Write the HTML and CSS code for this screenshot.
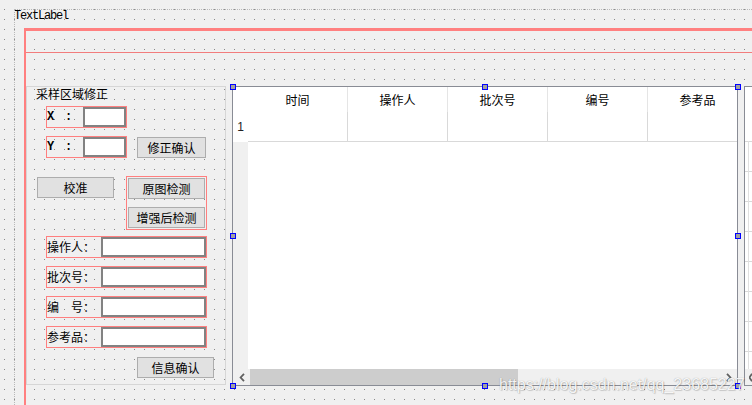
FILE: index.html
```html
<!DOCTYPE html>
<html>
<head>
<meta charset="utf-8">
<link rel="stylesheet" href="styles.css">
</head>
<body>
<div class="form">
  <div class="text-label">TextLabel</div>
  <div class="outer-layout">
    <div class="inner-layout">
      <div class="main-row">
        <div class="group">
          <div class="group-title">采样区域修正</div>
          <div class="row-x">
            <div class="lay field-xy"><span class="xy-label">X  :</span><span class="edit edit-xy"></span></div>
          </div>
          <div class="row-y">
            <div class="lay field-xy"><span class="xy-label">Y  :</span><span class="edit edit-xy"></span></div>
            <button class="btn btn-fix">修正确认</button>
          </div>
          <div class="row-cal">
            <button class="btn btn-cal">校准</button>
            <div class="lay detect">
              <button class="btn">原图检测</button>
              <button class="btn">增强后检测</button>
            </div>
          </div>
          <div class="fields">
            <div class="lay field"><span class="f-label">操作人：</span><span class="edit"></span></div>
            <div class="lay field"><span class="f-label">批次号：</span><span class="edit"></span></div>
            <div class="lay field"><span class="f-label">编　号：</span><span class="edit"></span></div>
            <div class="lay field"><span class="f-label">参考品：</span><span class="edit"></span></div>
          </div>
          <button class="btn btn-info">信息确认</button>
        </div>

        <div class="table">
          <div class="t-head">
            <div class="corner"></div>
            <div class="th">时间</div>
            <div class="th">操作人</div>
            <div class="th">批次号</div>
            <div class="th">编号</div>
            <div class="th">参考品</div>
          </div>
          <div class="t-row">
            <div class="rh">1</div>
            <div class="td"></div>
            <div class="td"></div>
            <div class="td"></div>
            <div class="td"></div>
            <div class="td"></div>
          </div>
          <div class="t-body">
            <div class="rh-fill"></div>
            <div class="vp"></div>
          </div>
          <div class="hscroll">
            <div class="arrow"><svg width="6" height="9" viewBox="0 0 6 9"><path d="M5 0.8 L1.6 4.5 L5 8.2" fill="none" stroke="#606060" stroke-width="1.8"/></svg></div>
            <div class="thumb"></div>
            <div class="track"></div>
            <div class="arrow"><svg width="6" height="9" viewBox="0 0 6 9"><path d="M1 0.8 L4.4 4.5 L1 8.2" fill="none" stroke="#606060" stroke-width="1.8"/></svg></div>
          </div>
          <span class="handle h-tl"></span>
          <span class="handle h-tm"></span>
          <span class="handle h-tr"></span>
          <span class="handle h-ml"></span>
          <span class="handle h-mr"></span>
          <span class="handle h-bl"></span>
          <span class="handle h-bm"></span>
          <span class="handle h-br"></span>
        </div>

        <div class="table2">
          <div class="t2-body">
            <div class="t2-rh"></div>
            <div class="t2-col"></div>
          </div>
          <div class="t2-scroll">
            <svg width="3" height="9" viewBox="0 0 3 9"><path d="M3 0.8 L0.4 4.5 L3 8.2" fill="none" stroke="#606060" stroke-width="1.8"/></svg>
          </div>
        </div>
      </div>
    </div>
  </div>
</div>
<div class="watermark">https://blog.csdn.net/qq_23685227</div>
</body>
</html>
```

FILE: styles.css
```css
* { box-sizing: border-box; }
html, body { margin: 0; }
body {
  width: 752px;
  height: 405px;
  overflow: hidden;
  position: relative;
  padding: 9px 0 0 14px;
  background-color: #f0f0f0;
  background-image: conic-gradient(from 270deg at 1px 1px, #8a8a8a 90deg, transparent 0);
  background-size: 10px 10px;
  background-position: 4px 9px;
  font-family: "Noto Sans CJK SC", "Liberation Sans", sans-serif;
  font-size: 12px;
  color: #000;
}
.form {
  height: 396px;
  border-top: 1px dotted #b8b8b8;
  border-left: 1px dotted #b8b8b8;
  overflow: hidden;
}
.text-label {
  font-family: "Liberation Mono", monospace;
  font-size: 12px;
  letter-spacing: -1.2px;
  line-height: 13px;
  height: 13px;
  margin-left: -1px;
}
.outer-layout {
  margin-top: 5px;
  margin-left: 9px;
  height: 377px;
  border-top: 3px solid #ff8080;
  border-left: 2px solid #ff8080;
  overflow: hidden;
}
.inner-layout {
  margin-top: 21px;
  border-top: 1px solid #f27c7c;
}
.main-row {
  display: flex;
  align-items: flex-start;
  margin-top: 33px;
}
.group {
  flex: none;
  width: 200px;
  height: 299px;
  border: 1px solid #d6d6d6;
}
.group-title {
  margin-left: 9px;
  height: 14px;
  line-height: 14px;
}
.lay {
  display: flex;
  border: 1px solid #ff7f7f;
}
.row-x { margin: 5px 0 0 19px; }
.field-xy { width: 81px; height: 22px; }
.xy-label {
  width: 36px;
  flex: none;
  font-family: "Liberation Mono", monospace;
  font-weight: bold;
  font-size: 12px;
  letter-spacing: -1.2px;
  line-height: 20px;
  white-space: pre;
}
.edit {
  display: block;
  flex: none;
  height: 20px;
  background: #fff;
  border: 2px solid #828282;
}
.edit-xy { width: 43px; }
.btn {
  display: block;
  padding: 0;
  margin: 0;
  font-family: "Noto Sans CJK SC", "Liberation Sans", sans-serif;
  font-size: 12px;
  line-height: 19px;
  color: #000;
  background: #e1e1e1;
  border: 1px solid #adadad;
  border-radius: 0;
  width: 77px;
  height: 21px;
}
.row-y {
  display: flex;
  align-items: flex-start;
  margin: 8px 0 0 19px;
}
.btn-fix { width: 69px; margin: 1px 0 0 10px; }
.row-cal {
  display: flex;
  align-items: flex-start;
  margin: 18px 0 0 10px;
}
.btn-cal { margin-top: 1px; }
.detect {
  flex-direction: column;
  gap: 8px;
  padding: 1px;
  margin-left: 12px;
  width: 81px;
  height: 54px;
}
.fields {
  display: flex;
  flex-direction: column;
  gap: 8px;
  margin: 6px 0 0 19px;
}
.field { width: 161px; height: 22px; }
.f-label { width: 54px; flex: none; line-height: 20px; }
.field .edit { width: 105px; }
.btn-info { margin: 9px 0 0 110px; }

.table {
  flex: none;
  position: relative;
  display: flex;
  flex-direction: column;
  margin-left: 6px;
  width: 506px;
  height: 300px;
  border: 1px solid #898c95;
  background: #fff;
}
.t-head, .t-row { display: flex; flex: none; overflow: hidden; }
.t-head { height: 25px; }
.t-row { height: 30px; }
.corner, .rh { width: 15px; flex: none; background: #fff; }
.th {
  width: 100px;
  flex: none;
  text-align: center;
  line-height: 25px;
  border-right: 1px solid #e5e5e5;
}
.rh {
  text-align: center;
  line-height: 30px;
  font-family: "Liberation Sans", sans-serif;
  color: #222;
}
.td {
  width: 100px;
  flex: none;
  border-right: 1px solid #d9d9d9;
  border-bottom: 1px solid #d9d9d9;
}
.t-body { flex: 1; display: flex; }
.rh-fill { width: 15px; flex: none; background: #f0f0f0; }
.vp { flex: 1; background: #fff; }
.hscroll {
  flex: none;
  display: flex;
  height: 16px;
  background: #f0f0f0;
}
.arrow {
  width: 17px;
  flex: none;
  display: flex;
  align-items: center;
  justify-content: center;
}
.thumb { width: 268px; flex: none; background: #cdcdcd; }
.track { flex: 1; }
.handle {
  position: absolute;
  width: 6px;
  height: 6px;
  border: 1px solid #0000ff;
  background: #a0a0a0;
}
.h-tl { left: -3px; top: -3px; }
.h-tm { left: 249px; top: -3px; }
.h-tr { left: 502px; top: -3px; }
.h-ml { left: -3px; top: 146px; }
.h-mr { left: 502px; top: 146px; }
.h-bl { left: -3px; top: 296px; }
.h-bm { left: 249px; top: 296px; }
.h-br { left: 502px; top: 296px; }

.table2 {
  flex: none;
  display: flex;
  flex-direction: column;
  margin-left: 6px;
  width: 8px;
  height: 300px;
  border: 1px solid #898c95;
  border-right: none;
  background: #fff;
}
.t2-body { flex: 1; display: flex; }
.t2-rh {
  width: 3px;
  flex: none;
  margin-top: 54px;
  background: repeating-linear-gradient(to bottom, #d9d9d9 0 1px, #fff 1px 30px);
}
.t2-col {
  flex: 1;
  margin-top: 54px;
  border-left: 1px solid #e0e0e0;
  background: repeating-linear-gradient(to bottom, #d9d9d9 0 1px, #fff 1px 30px);
}
.t2-scroll {
  flex: none;
  height: 16px;
  display: flex;
  align-items: center;
  justify-content: flex-end;
  background: #f0f0f0;
}
.watermark {
  position: absolute;
  left: 499px;
  top: 376px;
  font-family: "Liberation Sans", sans-serif;
  font-size: 16px;
  line-height: 18px;
  white-space: nowrap;
  color: rgba(255, 255, 255, 0.92);
  text-shadow: 0 0 1px rgba(0, 0, 0, 0.35), 1px 1px 1px rgba(0, 0, 0, 0.15);
}
```
